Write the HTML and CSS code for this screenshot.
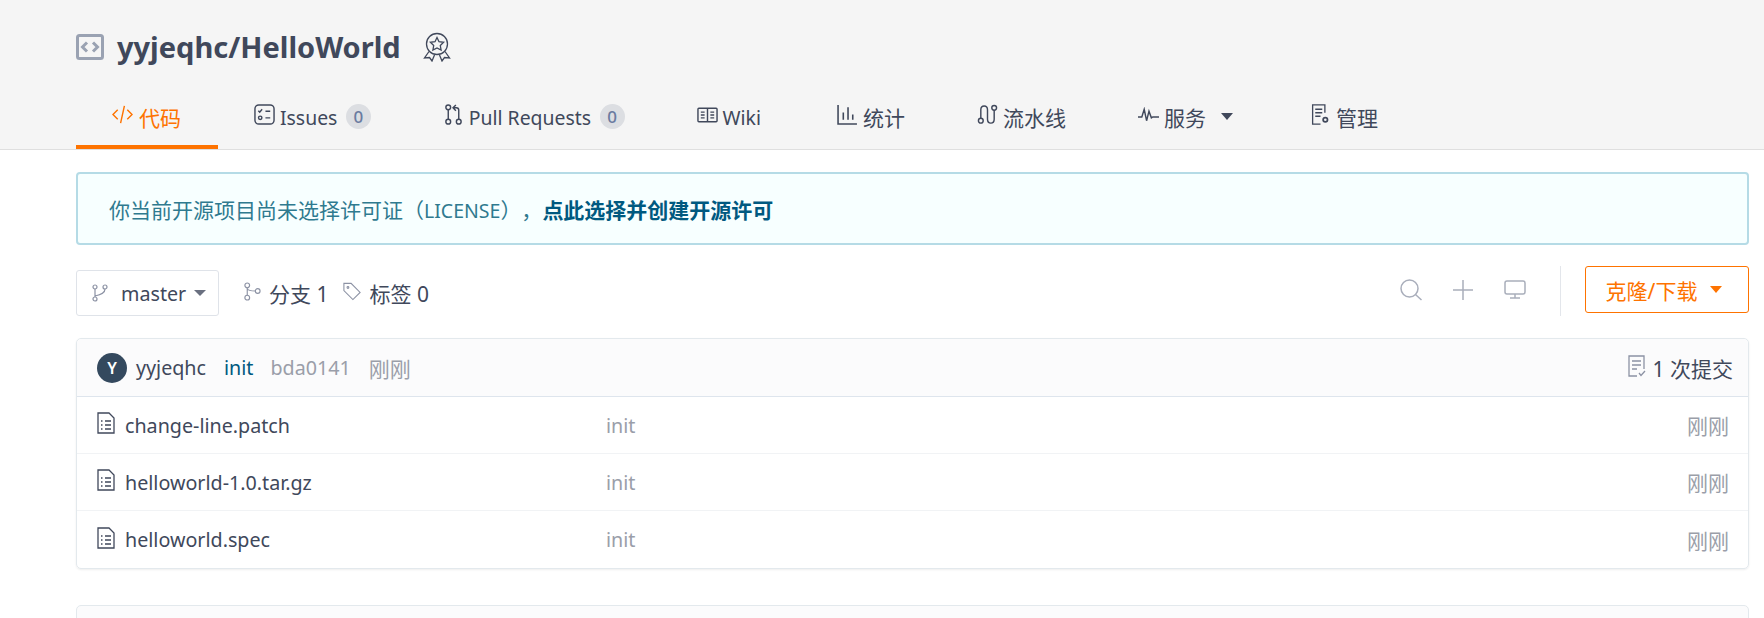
FILE: index.html
```html
<!DOCTYPE html>
<html lang="zh-CN">
<head>
<meta charset="utf-8">
<title>yyjeqhc/HelloWorld</title>
<link rel="stylesheet" href="styles.css">
</head>
<body>
<header class="repo-head">
  <div class="title-row">
    <svg class="repo-icon" viewBox="0 0 28 26"><rect x="1.500" y="1.500" width="25" height="23" rx="2"/><path d="M11 8.500 6.500 13l4.500 4.500M17 8.500l4.500 4.500-4.500 4.500"/></svg>
    <h1 class="repo-name">yyjeqhc/HelloWorld</h1>
    <svg class="badge-icon" viewBox="0 0 28 30"><circle cx="14" cy="12" r="10.500"/><path d="m14 5.500 2 4.200 4.600.6-3.300 3.200.8 4.600-4.100-2.200-4.100 2.200.8-4.600-3.300-3.200 4.600-.6z"/><path d="M6 19.500 1.500 26l5-.5 2.500 3.500 2.500-6M22 19.500l4.500 6.500-5-.5-2.500 3.500-2.500-6"/></svg>
  </div>
  <nav class="tabs">
    <a class="tab tab-active"><svg class="ic" viewBox="0 0 22 20"><path d="M6 5 1 10l5 5M16 5l5 5-5 5M13 1 9 19"/></svg><span class="zh">代码</span></a>
    <a class="tab"><svg class="ic" viewBox="0 0 22 22"><rect x="1" y="1" width="20" height="20" rx="4"/><path d="m4.500 7 1.500 1.500L8.500 5.500M12 7.500h5M12 14.500h5"/><circle cx="6.500" cy="14.500" r="1.800"/></svg><span class="tab-lat">Issues</span><span class="count">0</span></a>
    <a class="tab"><svg class="ic" viewBox="0 0 18 22"><circle cx="3.500" cy="3.500" r="2.500"/><circle cx="3.500" cy="18.500" r="2.500"/><circle cx="14.500" cy="18.500" r="2.500"/><path d="M3.500 6v10M14.500 16V6.500Q14.500 4 12 4H9M11.500 1 8.500 4l3 3"/></svg><span class="tab-lat">Pull Requests</span><span class="count">0</span></a>
    <a class="tab tab-wiki"><svg class="ic ic-wide" viewBox="0 0 22 16"><rect x="1" y="1" width="20" height="14" rx="1"/><path d="M11 1v14M4 5h4M4 8h4M4 11h4M14 5h4M14 8h4M14 11h4"/></svg><span class="tab-lat">Wiki</span></a>
    <a class="tab"><svg class="ic" viewBox="0 0 20 20"><path d="M1 1v18h18M6 15V8M10.500 15V3M15 15v-5"/></svg><span class="zh">统计</span></a>
    <a class="tab"><svg class="ic" viewBox="0 0 20 22"><circle cx="3" cy="17.500" r="2.500"/><circle cx="17" cy="4" r="2.500"/><path d="M3 15V6q0-4 3.500-4T10 6v10q0 4 3.500 4t3.500-4V6.500"/></svg><span class="zh">流水线</span></a>
    <a class="tab"><svg class="ic ic-wide" viewBox="0 0 22 16"><path d="M0 10h4l2.500-8L9 14l2.500-10L14 11l1.500-1H22"/></svg><span class="zh">服务</span><span class="caret caret-dark"></span></a>
    <a class="tab"><svg class="ic" viewBox="0 0 20 24"><path d="M15 10V1H1v22h9M4 6h8M4 10h8M4 14h6"/><circle class="gear" cx="15.500" cy="18" r="2.500"/></svg><span class="zh">管理</span></a>
  </nav>
</header>

<main class="content">
  <div class="notice"><span class="zh">你当前开源项目尚未选择许可证（<span class="lat">LICENSE</span>），</span><a class="notice-link zh">点此选择并创建开源许可</a></div>

  <div class="toolbar">
    <div class="branch-btn"><svg class="ic-muted" viewBox="0 0 16 18"><circle cx="3" cy="3" r="2"/><circle cx="3" cy="15" r="2"/><circle cx="13" cy="3" r="2"/><path d="M3 5v8M13 5q0 5-10 7"/></svg><span>master</span><span class="caret caret-gray"></span></div>
    <a class="stat"><svg class="ic-stat" viewBox="0 0 18 20"><circle cx="4" cy="3.500" r="2.500"/><circle cx="4" cy="16.500" r="2.500"/><circle cx="15" cy="9.500" r="2.500"/><path d="M4 6v8M4 7q1 2.500 8.500 2.500"/></svg><span class="zh">分支 1</span></a>
    <a class="stat"><svg class="ic-stat" viewBox="0 0 20 20"><path d="M1 1h8l10 10-8 8L1 9z"/><circle cx="5.500" cy="5.500" r="1"/></svg><span class="zh">标签 0</span></a>
    <div class="tools">
      <svg class="tool" viewBox="0 0 22 22"><circle cx="9.500" cy="9.500" r="8.500"/><path d="m15.500 15.500 6 5.500"/></svg>
      <svg class="tool" viewBox="0 0 22 22"><path d="M11 1v20M1 11h20"/></svg>
      <svg class="tool" viewBox="0 0 22 20"><rect x="1" y="1" width="20" height="13" rx="2"/><path d="M11 14v4M6 18h10"/></svg>
    </div>
    <a class="clone-btn"><span class="zh">克隆/下载</span><span class="caret caret-orange"></span></a>
  </div>

  <section class="panel">
    <div class="commit-row">
      <span class="avatar">Y</span>
      <span class="author">yyjeqhc</span>
      <a class="commit-msg">init</a>
      <span class="muted">bda0141</span>
      <span class="muted zh">刚刚</span>
      <a class="commit-count"><svg class="ic-commit" viewBox="0 0 18 22"><path d="M9 21H1V1h15v13M4 6h9M4 10h9M4 14h5M11 18l2 2.500 4-4.500"/></svg><span class="zh">1 次提交</span></a>
    </div>
    <div class="file-row">
      <span class="file-name"><svg class="ic-file" viewBox="0 0 18 22"><path d="M1 1h11l5 5v15H1zM8 9h6M8 13h6M8 17h6M4 9h1.500M4 13h1.500M4 17h1.500"/></svg>change-line.patch</span>
      <span class="file-msg">init</span><span class="file-time zh">刚刚</span>
    </div>
    <div class="file-row">
      <span class="file-name"><svg class="ic-file" viewBox="0 0 18 22"><path d="M1 1h11l5 5v15H1zM8 9h6M8 13h6M8 17h6M4 9h1.500M4 13h1.500M4 17h1.500"/></svg>helloworld-1.0.tar.gz</span>
      <span class="file-msg">init</span><span class="file-time zh">刚刚</span>
    </div>
    <div class="file-row">
      <span class="file-name"><svg class="ic-file" viewBox="0 0 18 22"><path d="M1 1h11l5 5v15H1zM8 9h6M8 13h6M8 17h6M4 9h1.500M4 13h1.500M4 17h1.500"/></svg>helloworld.spec</span>
      <span class="file-msg">init</span><span class="file-time zh">刚刚</span>
    </div>
  </section>

  <section class="panel-next"></section>
</main>
</body>
</html>
```
FILE: styles.css
```css
* { box-sizing: border-box; }
html, body { margin: 0; height: 618px; overflow: hidden; background: #fff; }
body { font-family: "Noto Sans", "Noto Sans CJK SC", sans-serif; font-size: 19.7px; color: #40485b; text-spacing-trim: space-all; }
a { color: inherit; text-decoration: none; }
svg { fill: none; stroke: currentColor; stroke-width: 1.5; flex: none; }
.zh { font-size: 21px; }
.lat { font-size: 19.5px; }

.repo-head { background: #f5f5f5; height: 150px; border-bottom: 1px solid #dfdfdf; padding: 0 76px; }
.title-row { height: 88px; display: flex; align-items: center; padding-top: 5px; }
.repo-icon { width: 28px; height: 26px; margin-right: 13px; color: #9aa2b2; stroke-width: 3; }
.repo-name { margin: 0; font-size: 29px; font-weight: 700; color: #40485b; line-height: 40px; }
.badge-icon { width: 28px; height: 30px; margin-left: 22px; color: #40485b; stroke-width: 1.300; }

.tabs { display: flex; height: 61px; }
.tab { display: flex; align-items: center; gap: 5px; height: 61px; padding: 0 36px; border-bottom: 4px solid transparent; }
.tab-active { color: #fe7300; border-bottom-color: #fe7300; width: 142px; gap: 6px; }
.tab-wiki { padding-right: 40px; }
.tab-lat { font-size: 19.4px; margin-top: 2px; }
.ic { width: 21px; height: 21px; margin-bottom: 4px; }
.ic-wide { height: 16px; }
.gear { stroke-width: 2; }
.count { margin-left: 3.500px; min-width: 25px; height: 25px; border-radius: 13px; background: #dcdee2; color: #6a7ba0; font-size: 17px; font-weight: 500; display: flex; align-items: center; justify-content: center; }

.caret { display: inline-block; width: 0; height: 0; border-style: solid; border-width: 7px 6.500px 0; border-color: transparent; }
.caret-dark { border-top-color: #40485b; margin-left: 10px; margin-right: 5px; }
.caret-gray { border-top-color: #6a7080; border-width: 6px 6px 0; }
.caret-orange { border-top-color: #fe7300; margin-left: 13px; }

.content { padding: 22px 15px 0 76px; }
.notice { height: 73px; display: flex; align-items: center; padding: 0 31px; background: #f7ffff; border: 2px solid #b5dbe6; border-radius: 4px; color: #2f7a8f; }
.notice-link { font-weight: 700; color: #005980; }

.toolbar { display: flex; height: 50px; margin-top: 21px; }
.branch-btn { display: flex; align-items: center; align-self: flex-end; width: 143px; height: 46px; padding: 0 12px 0 15px; border: 1px solid #dfe3e9; border-radius: 3px; gap: 13px; }
.branch-btn .caret { margin-left: -5px; }
.ic-muted { width: 16px; height: 18px; color: #8c92a4; stroke-width: 1.200; }
.ic-stat { width: 18px; height: 19px; color: #8c92a4; stroke-width: 1.200; margin-bottom: 3px; }
.stat { display: flex; align-items: center; align-self: flex-end; height: 46px; gap: 8px; margin-left: 24px; }
.stat + .stat { margin-left: 15px; }
.tools { margin-left: auto; display: flex; align-items: center; gap: 30px; height: 50px; padding: 0 34px 2px 0; border-right: 1px solid #e3e6eb; margin-right: 24px; color: #a9aebb; }
.tool { width: 22px; height: 22px; }
.clone-btn { display: flex; align-items: center; justify-content: center; align-self: flex-start; width: 164px; height: 47px; padding-right: 6px; border: 1px solid #fe7300; border-radius: 3px; color: #fe7300; }

.panel { margin-top: 22px; border: 1px solid #e3e9ed; border-radius: 5px; box-shadow: 0 1px 2px rgba(34, 36, 38, .08); }
.commit-row { display: flex; align-items: center; height: 58px; padding: 0 15px 0 20px; background: #fbfbfc; border-bottom: 1px solid #dee5ed; border-radius: 5px 5px 0 0; }
.avatar { width: 30px; height: 30px; border-radius: 50%; background: #34495e; color: #fff; font-size: 16px; font-weight: 600; display: flex; align-items: center; justify-content: center; margin-right: 9px; }
.author { margin-right: 18px; }
.commit-msg { color: #005980; margin-right: 17px; }
.muted { color: #9a9ea9; margin-right: 18px; }
.commit-count { margin-left: auto; display: flex; align-items: center; gap: 7px; }
.ic-commit { width: 18px; height: 22px; color: #8c92a4; stroke-width: 1.300; margin-bottom: 4px; }
.file-row { display: flex; align-items: center; height: 57px; padding: 0 19px 0 20px; border-bottom: 1px solid #f1f3f5; }
.file-row:last-child { border-bottom: 0; }
.file-name { width: 509px; display: flex; align-items: center; gap: 10px; }
.ic-file { width: 18px; height: 22px; color: #40485b; stroke-width: 1.300; margin-bottom: 4px; }
.file-msg { color: #9a9ea9; }
.file-time { margin-left: auto; color: #9a9ea9; }
.panel-next { margin-top: 36px; height: 40px; border: 1px solid #e3e9ed; border-radius: 5px; background: #fbfbfc; }
```
